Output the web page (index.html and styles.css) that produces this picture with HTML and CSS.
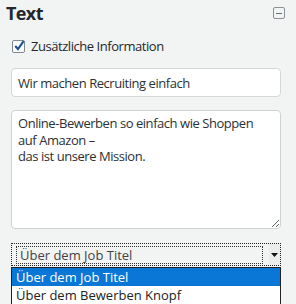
FILE: index.html
```html
<!DOCTYPE html>
<html lang="de">
<head>
  <meta charset="UTF-8" />
  <title>Text</title>
  <link rel="stylesheet" href="styles.css">
</head>
<body>
  <div class="panel">
    <div class="panel-head">
      <h2 class="panel-title">Text</h2>
      <span class="collapse-btn"><span class="collapse-bar"></span></span>
    </div>
    <div class="panel-body">
      <label class="check-row">
        <span class="check-box">
          <svg width="12" height="12" viewBox="0 0 12 12"><path d="M2.2 6 L5 9 L10.6 1.2" fill="none" stroke="#1d4f8f" stroke-width="2.1"/></svg>
        </span>
        Zusätzliche Information
      </label>
      <input class="text-input" type="text" value="Wir machen Recruiting einfach" />
      <textarea class="text-area" wrap="off">Online-Bewerben so einfach wie Shoppen
auf Amazon –
das ist unsere Mission.</textarea>
      <div class="select-wrap">
        <div class="select-box">
          <span class="select-value">Über dem Job Titel</span>
          <span class="select-arrow"><svg width="7" height="4" viewBox="0 0 7 4"><path d="M0 0 H7 L3.5 4 Z" fill="#111"/></svg></span>
        </div>
        <ul class="select-list">
          <li class="select-item active">Über dem Job Titel</li>
          <li class="select-item">Über dem Bewerben Knopf</li>
        </ul>
      </div>
    </div>
  </div>
</body>
</html>
```

FILE: styles.css
```css
body {
  margin: 0;
  background: #f2f3f3;
  font-family: 'Open Sans', sans-serif;
  color: #32373c;
  letter-spacing: -0.45px;
}
.panel {
  width: 296px;
  height: 304px;
  overflow: hidden;
}
.panel-head {
  display: flex;
  align-items: center;
  justify-content: space-between;
  height: 26px;
  padding: 0 11px 0 6px;
}
.panel-title {
  margin: 0;
  font-size: 18px;
  font-weight: bold;
  color: #23282d;
  letter-spacing: -0.6px;
}
.collapse-btn {
  width: 10px;
  height: 10px;
  border: 1px solid #8b9197;
  border-radius: 2px;
  display: flex;
  align-items: center;
  justify-content: center;
}
.collapse-bar {
  width: 6px;
  height: 1px;
  background: #6b7177;
}
.panel-body {
  padding: 12px 16px 0 11px;
}
.check-row {
  display: flex;
  align-items: center;
  gap: 6px;
  margin-left: 1px;
  font-size: 13px;
  color: #23282d;
  height: 16px;
}
.check-box {
  width: 11px;
  height: 11px;
  border: 1px solid #7e8993;
  border-radius: 2px;
  background: #fff;
  display: flex;
  align-items: center;
  justify-content: center;
}
.check-box svg {
  flex: none;
  margin: -1px -1px 0 0;
}
.text-input {
  display: block;
  box-sizing: border-box;
  width: 270px;
  height: 29px;
  margin-top: 14px;
  padding: 0 6px;
  border: 1px solid #d6d7d7;
  border-radius: 4px;
  background: #fff;
  font-family: 'Open Sans', sans-serif;
  font-size: 13px;
  letter-spacing: -0.45px;
  color: #2c3135;
  outline: none;
}
.text-area {
  display: block;
  box-sizing: border-box;
  width: 270px;
  height: 119px;
  margin-top: 13px;
  padding: 4px 6px;
  border: 1px solid #d0d1d1;
  border-radius: 4px;
  background: #fff;
  font-family: 'Open Sans', sans-serif;
  font-size: 13px;
  letter-spacing: -0.45px;
  line-height: 16.5px;
  color: #2c3135;
  resize: vertical;
  overflow: hidden;
  outline: none;
}
.select-wrap {
  position: relative;
  margin-top: 14px;
}
.select-box {
  box-sizing: border-box;
  width: 270px;
  height: 23px;
  border: 1px dotted #222;
  display: flex;
  align-items: center;
  background: #f2f3f3;
}
.select-value {
  flex: 1;
  margin: 0 6px 0 4px;
  padding: 0 3px;
  height: 16px;
  line-height: 16px;
  border: 1px dotted #333;
  font-size: 13px;
  letter-spacing: 0;
  color: #444;
}
.select-arrow {
  width: 11px;
  height: 21px;
  display: flex;
  align-items: center;
  justify-content: center;
  background: #ececec;
}
.select-list {
  list-style: none;
  margin: 1px 0 0;
  padding: 0;
  width: 270px;
  box-sizing: border-box;
  border: 1px solid #222;
  background: #fff;
  letter-spacing: 0;
}
.select-item {
  height: 18px;
  line-height: 18px;
  padding-left: 4px;
  font-size: 13px;
  color: #222;
}
.select-item.active {
  background: #0a77d6;
  color: #fff;
}
```
